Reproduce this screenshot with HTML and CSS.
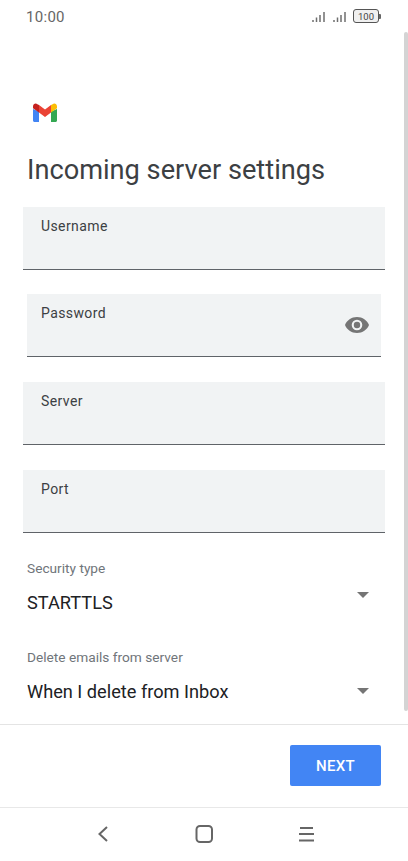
FILE: index.html
```html
<!DOCTYPE html>
<html lang="en">
<head>
<meta charset="utf-8">
<title>Incoming server settings</title>
<link rel="stylesheet" href="styles.css">
</head>
<body>
<div class="phone">
  <header class="status">
    <span class="time">10:00</span>
    <div class="status-icons">
      <svg class="signal" width="15" height="12" viewBox="0 0 15 12"><path d="M1 9v2M4.500 6.500V11M8 4v7M12 1v10" stroke="#6f6f6f" stroke-width="1.500" fill="none"/></svg>
      <svg class="signal" width="15" height="12" viewBox="0 0 15 12"><path d="M1 9v2M4.500 6.500V11M8 4v7M12 1v10" stroke="#6f6f6f" stroke-width="1.500" fill="none"/></svg>
      <div class="battery"><span class="battery-level">100</span></div>
      <span class="battery-cap"></span>
    </div>
  </header>
  <div class="scrollbar"></div>
  <main class="content">
    <svg class="logo" width="26" height="20" viewBox="0 0 26 20">
      <path d="M1 6v11.500C1 18.300 1.700 19 2.500 19H7V8.500z" fill="#4285f4"/>
      <path d="M19 8.500V19h4.500c.8 0 1.500-.7 1.500-1.500V6z" fill="#34a853"/>
      <path d="M19 2v7.500l6-4.300V3.500C25 1 22.400-.2 20.600 1.200z" fill="#fbbc04"/>
      <path d="M7 9.500V2l6 4.500L19 2v7.500L13 14z" fill="#ea4335"/>
      <path d="M1 3.500v1.700l6 4.300V2L5.400 1.200C3.600-.2 1 1 1 3.500z" fill="#c5221f"/>
    </svg>
    <h1 class="title">Incoming server settings</h1>
    <div class="field wide first-field"><span class="field-label">Username</span></div>
    <div class="field narrow">
      <span class="field-label">Password</span>
      <svg class="eye" width="26" height="18" viewBox="0 0 26 18"><path fill-rule="evenodd" d="M13 1C7.500 1 2.800 4.300 1 9c1.800 4.700 6.500 8 12 8s10.200-3.300 12-8c-1.800-4.700-6.500-8-12-8zm0 13.300A5.300 5.300 0 1 1 13 3.700a5.300 5.300 0 0 1 0 10.600zM13 5.800a3.200 3.200 0 1 0 0 6.400 3.200 3.200 0 0 0 0-6.400z" fill="#757575"/></svg>
    </div>
    <div class="field wide"><span class="field-label">Server</span></div>
    <div class="field wide"><span class="field-label">Port</span></div>
    <div class="select first">
      <span class="select-label">Security type</span>
      <div class="select-row"><span class="select-value">STARTTLS</span><span class="arrow arrow-high"></span></div>
    </div>
    <div class="select">
      <span class="select-label">Delete emails from server</span>
      <div class="select-row"><span class="select-value">When I delete from Inbox</span><span class="arrow"></span></div>
    </div>
  </main>
  <div class="actions"><button class="next">NEXT</button></div>
  <nav class="navbar">
    <svg width="14" height="18" viewBox="0 0 14 18"><path d="M11 2 3.500 9l7.500 7" stroke="#666" stroke-width="2" fill="none"/></svg>
    <svg width="18" height="18" viewBox="0 0 18 18"><rect x="1.500" y="1" width="15.500" height="16" rx="3.500" stroke="#666" stroke-width="2" fill="none"/></svg>
    <svg width="17" height="18" viewBox="0 0 17 18"><path d="M2 3h13M1 9h15M1 15.500h15" stroke="#666" stroke-width="2" fill="none"/></svg>
  </nav>
</div>
</body>
</html>
```
FILE: styles.css
```css
* { box-sizing: border-box; }
html, body { margin: 0; padding: 0; }
body { background: #fff; font-family: Roboto, "Liberation Sans", sans-serif; }
.phone { position: relative; width: 408px; height: 861px; display: flex; flex-direction: column; overflow: hidden; background: #fff; }
.status { height: 32px; flex: none; display: flex; justify-content: space-between; align-items: flex-start; padding: 8px 27px 0 26px; }
.time { font-size: 15px; line-height: 18px; color: #666; letter-spacing: .3px; }
.status-icons { display: flex; align-items: center; padding-top: 1px; }
.signal { margin-right: 6px; margin-top: 1px; }
.signal + .signal { margin-right: 5px; }
.battery { width: 26px; height: 14px; border: 1px solid #555; border-radius: 3px; background: #f0f0f0; display: flex; align-items: center; justify-content: center; }
.battery-level { font-size: 9.500px; line-height: 11px; color: #444; }
.battery-cap { width: 2px; height: 5px; background: #666; border-radius: 0 1px 1px 0; }
.scrollbar { position: absolute; top: 32px; right: 0; width: 4px; height: 679px; background: #d4d4d4; border-radius: 2px; }
.content { flex: none; height: 693px; border-bottom: 1px solid #e4e4e4; display: flex; flex-direction: column; }
.logo { display: block; margin: 71px 0 0 32px; flex: none; }
.title { margin: 27px 0 0 27px; font-size: 27.200px; line-height: 40px; font-weight: 400; color: #3c4043; }
.field { position: relative; height: 63px; background: #f1f3f4; border-bottom: 1px solid #5f6368; padding: 11px 14px 0; flex: none; }
.field.wide { margin: 0 23px 25px; padding-left: 18px; }
.narrow { margin: 0 27px 25px; }
.field.first-field { margin-top: 17px; margin-bottom: 24px; }
.field-label { font-size: 14px; line-height: 16px; color: #3c4043; letter-spacing: .4px; display: block; font-weight: 400; }
.eye { position: absolute; right: 11px; top: 22px; }
.select { display: block; padding: 0 39px 0 27px; margin-top: 32px; }
.select.first { margin-top: 1px; }
.select-label { display: block; font-size: 13.700px; line-height: 18px; color: #70757a; }
.select-row { display: flex; justify-content: space-between; align-items: center; margin-top: 13px; height: 26px; }
.select-value { font-size: 18.200px; line-height: 24px; color: #202124; }
.arrow { width: 0; height: 0; border-left: 6px solid transparent; border-right: 6px solid transparent; border-top: 6px solid #757575; margin-bottom: 2px; }
.arrow-high { margin-bottom: 16px; }
.actions { height: 83px; flex: none; display: flex; justify-content: flex-end; align-items: flex-start; padding: 20px 27px 0 0; border-bottom: 1px solid #e8e8e8; }
.next { width: 91px; height: 41px; border: none; border-radius: 2px; background: #4285f4; color: #fff; font: 500 15px Roboto, sans-serif; letter-spacing: .3px; padding: 0; }
.navbar { flex: 1; display: flex; align-items: flex-start; justify-content: center; gap: 85px; padding-top: 17px; padding-left: 2px; }
```
